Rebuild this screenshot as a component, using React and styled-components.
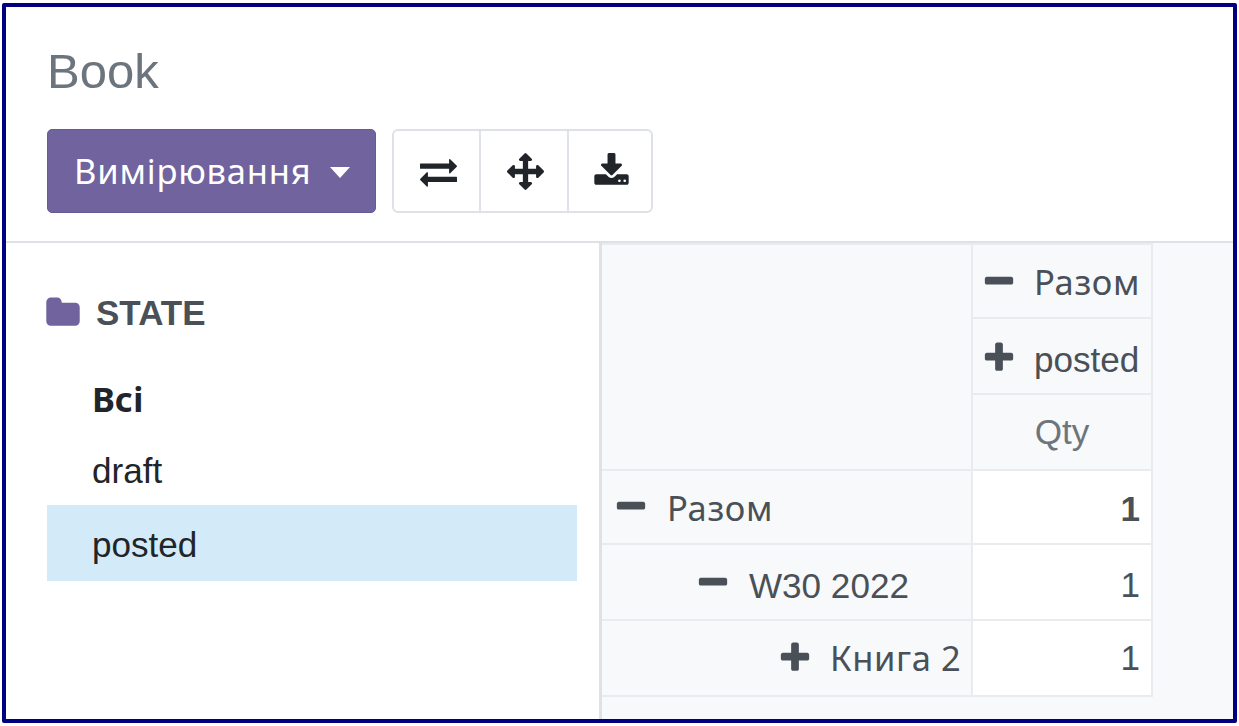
import React from "react";
import styled, { createGlobalStyle, css } from "styled-components";

const GlobalStyle = createGlobalStyle`
  *, *::before, *::after { box-sizing: border-box; }
  body { margin: 0; background: #fff; }
`;

const sans = '"Liberation Sans", Arial, sans-serif';
const cyrillic = '"Noto Sans", "Open Sans", sans-serif';

const line = "#dee2e6";
const cellLine = "#e9ecef";

const typeface = css`
  font-family: ${(p) => (p.$cyrillic ? cyrillic : sans)};
  font-size: ${(p) => (p.$cyrillic ? 34.5 : 35.1)}px;
  letter-spacing: ${(p) => (p.$cyrillic && !p.$bold ? 0.6 : 0)}px;
`;

const Frame = styled.div`
  display: flex;
  flex-direction: column;
  width: 1235px;
  height: 720px;
  margin: 3px 0 0 2px;
  border: 4px solid #000080;
  border-radius: 2px;
  background: #fff;
  font-family: ${sans};
  font-size: 35px;
  color: #495057;
  overflow: hidden;
`;

const Page = styled.div`
  display: flow-root;
`;

const Header = styled.header`
  flex: none;
  height: 236px;
  padding: 36px 41px 0;
  border-bottom: 2px solid ${line};
`;

const Title = styled.h1`
  margin: 0;
  height: 86px;
  font-size: 49px;
  font-weight: 400;
  line-height: 56px;
  color: #6c757d;
`;

const Toolbar = styled.div`
  display: flex;
  gap: 16px;
`;

const MeasuresButton = styled.button`
  display: flex;
  align-items: center;
  justify-content: space-between;
  width: 329px;
  height: 84px;
  padding: 0 25px 0 26px;
  border: 1px solid #685a95;
  border-radius: 5px;
  background: #71639e;
  color: #fff;
  font: 400 34.5px/44px ${cyrillic};
  letter-spacing: 0.8px;
  white-space: nowrap;
`;

const Caret = styled.span`
  border: 10.5px solid transparent;
  border-top: 11.5px solid #fff;
  border-bottom: 0;
  margin-top: 2px;
`;

const ButtonGroup = styled.div`
  display: grid;
  grid-template-columns: 85px 88px 1fr;
  width: 261px;
  height: 84px;
  border: 2px solid ${line};
  border-radius: 6px;
`;

const IconButton = styled.button`
  display: flex;
  align-items: center;
  justify-content: center;
  padding: 0 0 0 3px;
  border: 0;
  background: none;
  color: #212529;

  & + & { border-left: 2px solid ${line}; }
`;

const Body = styled.div`
  flex: 1;
  display: flex;
  min-height: 0;
`;

const Sidebar = styled.aside`
  flex: none;
  width: 596px;
  padding: 47px 22px 0 41px;
  border-right: 3px solid ${line};
`;

const SectionTitle = styled.h2`
  display: flex;
  align-items: center;
  gap: 15px;
  height: 46px;
  margin: 0 0 26px -2px;
  font-size: 35px;
  font-weight: 700;
`;

const FilterItem = styled.div`
  ${typeface}
  height: ${(p) => p.$height}px;
  padding-left: 45px;
  background: ${(p) => (p.$active ? "#d3ebf8" : "transparent")};
  color: #212529;
  font-weight: ${(p) => (p.$bold ? 700 : 400)};
  line-height: ${(p) => p.$line}px;
`;

const Content = styled.main`
  flex: 1;
  background: #f8f9fb;
`;

const Pivot = styled.div`
  display: grid;
  grid-template-columns: 371px 180px;
  grid-template-rows: 74px 76px 76px 74px 76px 76px;
  width: 551px;
  border-top: 2px solid ${cellLine};
`;

const Corner = styled.div`
  grid-row: span 3;
  border-right: 2px solid ${cellLine};
  border-bottom: 2px solid ${cellLine};
`;

const Cell = styled.div`
  display: flex;
  align-items: center;
  gap: ${(p) => p.$gap ?? 17}px;
  justify-content: ${(p) => p.$justify || "flex-start"};
  padding: ${(p) => `${p.$top || 0}px ${p.$end || 0}px 0 ${p.$indent || 0}px`};
  border-right: 2px solid ${cellLine};
  border-bottom: 2px solid ${cellLine};
  background: ${(p) => (p.$value ? "#fff" : "transparent")};
  font-weight: ${(p) => (p.$bold ? 700 : 400)};
  color: ${(p) => (p.$muted ? "#6c757d" : "#495057")};
`;

const Label = styled.span`
  ${typeface}
  padding-top: ${(p) => p.$drop || 0}px;
  line-height: 44px;
  white-space: nowrap;
`;

const Svg = styled.svg`
  flex: none;
  display: block;
  width: ${(p) => p.$size}px;
  height: ${(p) => p.$size}px;
  fill: ${(p) => p.$color || "currentColor"};
`;

const paths = {
  exchange:
    "M1792 1184v192q0 13-9.5 22.5t-22.5 9.5h-1376v192q0 13-9.5 22.5t-22.5 9.5q-12 0-24-10l-319-320q-9-9-9-22 0-14 9-23l320-320q9-9 23-9 13 0 22.5 9.5t9.5 22.5v192h1376q13 0 22.5 9.5t9.5 22.5zm0-544q0 14-9 23l-320 320q-9 9-23 9-13 0-22.5-9.5t-9.5-22.5v-192h-1376q-13 0-22.5-9.5t-9.5-22.5v-192q0-13 9.5-22.5t22.5-9.5h1376v-192q0-14 9-23t23-9q12 0 24 10l319 319q9 9 9 23z",
  arrows:
    "M1792 896q0 26-19 45l-256 256q-19 19-45 19t-45-19-19-45v-128h-384v384h128q26 0 45 19t19 45-19 45l-256 256q-19 19-45 19t-45-19l-256-256q-19-19-19-45t19-45 45-19h128v-384h-384v128q0 26-19 45t-45 19-45-19l-256-256q-19-19-19-45t19-45l256-256q19-19 45-19t45 19 19 45v128h384v-384h-128q-26 0-45-19t-19-45 19-45l256-256q19-19 45-19t45 19l256 256q19 19 19 45t-19 45-45 19h-128v384h384v-128q0-26 19-45t45-19 45 19l256 256q19 19 19 45z",
  download:
    "M1344 1344q0-26-19-45t-45-19-45 19-19 45 19 45 45 19 45-19 19-45zm256 0q0-26-19-45t-45-19-45 19-19 45 19 45 45 19 45-19 19-45zm128-224v320q0 40-28 68t-68 28h-1472q-40 0-68-28t-28-68v-320q0-40 28-68t68-28h465l135 136q58 56 136 56t136-56l136-136h464q40 0 68 28t28 68zm-325-569q17 41-14 70l-448 448q-18 19-45 19t-45-19l-448-448q-31-29-14-70 17-39 59-39h256v-448q0-26 19-45t45-19h256q26 0 45 19t19 45v448h256q42 0 59 39z",
  folder:
    "M1728 608v704q0 92-66 158t-158 66h-1216q-92 0-158-66t-66-158v-960q0-92 66-158t158-66h320q92 0 158 66t66 158v32h672q92 0 158 66t66 158z",
  minus:
    "M1600 736v192q0 40-28 68t-68 28h-1216q-40 0-68-28t-28-68v-192q0-40 28-68t68-28h1216q40 0 68 28t28 68z",
  plus:
    "M1600 736v192q0 40-28 68t-68 28h-416v416q0 40-28 68t-68 28h-192q-40 0-68-28t-28-68v-416h-416q-40 0-68-28t-28-68v-192q0-40 28-68t68-28h416v-416q0-40 28-68t68-28h192q40 0 68 28t28 68v416h416q40 0 68 28t28 68z",
};

const Icon = ({ name, size = 36, color }) => (
  <Svg viewBox="0 0 1792 1792" $size={size} $color={color} aria-hidden="true">
    <path d={paths[name]} />
  </Svg>
);

export default function App() {
  return (
    <Page>
      <GlobalStyle />
      <Frame>
        <Header>
          <Title>Book</Title>
          <Toolbar>
            <MeasuresButton>
              Вимірювання
              <Caret />
            </MeasuresButton>
            <ButtonGroup>
              {["exchange", "arrows", "download"].map((name) => (
                <IconButton key={name} aria-label={name}>
                  <Icon name={name} size={37} />
                </IconButton>
              ))}
            </ButtonGroup>
          </Toolbar>
        </Header>
        <Body>
          <Sidebar>
            <SectionTitle>
              <Icon name="folder" color="#71639e" />
              STATE
            </SectionTitle>
            <FilterItem $height={74} $line={74} $cyrillic $bold>Всі</FilterItem>
            <FilterItem $height={69} $line={70}>draft</FilterItem>
            <FilterItem $height={76} $line={79} $active>posted</FilterItem>
          </Sidebar>
          <Content>
            <Pivot>
              <Corner />
              <Cell $indent={8} $top={2}>
                <Icon name="minus" />
                <Label $cyrillic>Разом</Label>
              </Cell>
              <Cell $indent={8} $top={3}>
                <Icon name="plus" />
                <Label $drop={4}>posted</Label>
              </Cell>
              <Cell $muted $justify="center">
                <Label>Qty</Label>
              </Cell>
              <Cell $indent={11} $gap={18}>
                <Icon name="minus" />
                <Label $cyrillic $drop={2}>Разом</Label>
              </Cell>
              <Cell $value $bold $justify="flex-end" $end={11}>
                <Label $drop={4}>1</Label>
              </Cell>
              <Cell $indent={93} $gap={18} $top={1}>
                <Icon name="minus" />
                <Label $drop={6}>W30 2022</Label>
              </Cell>
              <Cell $value $justify="flex-end" $end={11}>
                <Label $drop={6}>1</Label>
              </Cell>
              <Cell $indent={175}>
                <Icon name="plus" />
                <Label $cyrillic>Книга 2</Label>
              </Cell>
              <Cell $value $justify="flex-end" $end={11}>
                <Label>1</Label>
              </Cell>
            </Pivot>
          </Content>
        </Body>
      </Frame>
    </Page>
  );
}
